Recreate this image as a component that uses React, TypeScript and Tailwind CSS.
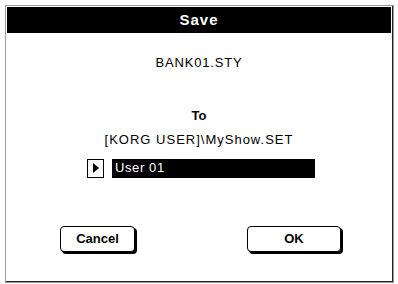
import React from 'react';

function DialogButton({ label, className }: { label: string; className: string }) {
  return (
    <button
      type="button"
      className={`flex h-[26px] items-center justify-center rounded-[4px] border border-black bg-white text-[13px] font-bold text-black shadow-[2px_2px_0_#000] ${className}`}
    >
      {label}
    </button>
  );
}

export default function App() {
  return (
    <div
      className="h-[284px] w-[398px] bg-white pl-[5px] pt-[5px]"
      style={{ fontFamily: '"Liberation Sans", Arial, sans-serif' }}
    >
      <div className="h-[278px] w-[389px] border border-[#9a9a9a]">
        <div className="flex h-full flex-col border border-[#222] border-t-0 border-l-0">
          {/* Title bar */}
          <div className="mx-[1px] mt-[1px] flex h-[26px] items-center justify-center bg-black">
            <span className="text-[15px] font-bold tracking-[1px] text-white">Save</span>
          </div>

          <div className="flex flex-1 flex-col items-center">
            <div className="mt-[20px] text-[13px] tracking-[0.8px] text-black">BANK01.STY</div>
            <div className="mt-[33px] text-[13px] font-bold text-black">To</div>
            <div className="mt-[5px] text-[13px] tracking-[1px] text-black">[KORG USER]\MyShow.SET</div>

            {/* Name field */}
            <div className="mt-[9px] flex w-full items-center pl-[81px]">
              <div className="flex h-[19px] w-[17px] items-center justify-center border border-black bg-white">
                <svg width="7" height="10" viewBox="0 0 7 10">
                  <path d="M1 0 L7 5 L1 10 Z" fill="#000" />
                </svg>
              </div>
              <div className="ml-[8px] flex h-[19px] w-[203px] items-center bg-black pl-[3px] text-[13px] tracking-[0.6px] text-white">
                User 01
              </div>
            </div>

            {/* Buttons */}
            <div className="mt-[48px] flex w-full">
              <DialogButton label="Cancel" className="ml-[54px] w-[75px]" />
              <DialogButton label="OK" className="ml-[112px] w-[94px]" />
            </div>
          </div>
        </div>
      </div>
    </div>
  );
}
